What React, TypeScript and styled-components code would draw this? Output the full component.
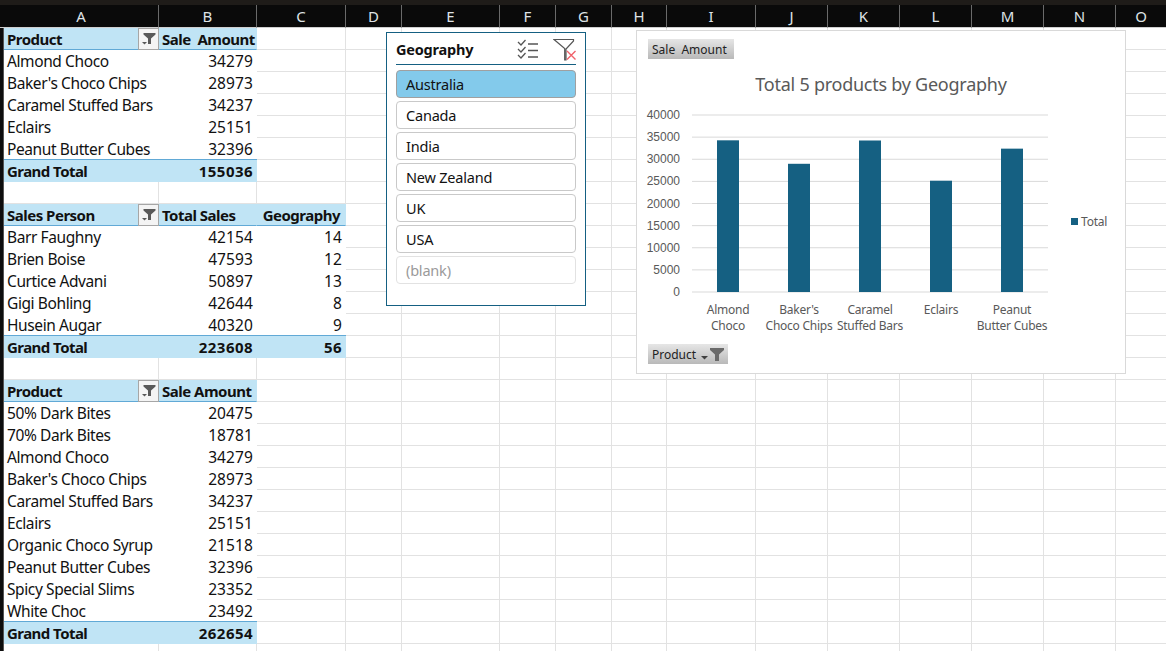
import React from "react";
import styled, { createGlobalStyle } from "styled-components";

const COLUMNS = [
  { name: "A", width: 155 },
  { name: "B", width: 98 },
  { name: "C", width: 89 },
  { name: "D", width: 56 },
  { name: "E", width: 98 },
  { name: "F", width: 56 },
  { name: "G", width: 56 },
  { name: "H", width: 55 },
  { name: "I", width: 89 },
  { name: "J", width: 72 },
  { name: "K", width: 72 },
  { name: "L", width: 72 },
  { name: "M", width: 72 },
  { name: "N", width: 72 },
  { name: "O", width: 51 },
];

type Pivot = {
  head: string[];
  rows: (string | number)[][];
  total: (string | number)[];
};

const PIVOTS: Pivot[] = [
  {
    head: ["Product", "Sale  Amount"],
    rows: [
      ["Almond Choco", 34279],
      ["Baker's Choco Chips", 28973],
      ["Caramel Stuffed Bars", 34237],
      ["Eclairs", 25151],
      ["Peanut Butter Cubes", 32396],
    ],
    total: ["Grand Total", 155036],
  },
  {
    head: ["Sales Person", "Total Sales", "Geography"],
    rows: [
      ["Barr Faughny", 42154, 14],
      ["Brien Boise", 47593, 12],
      ["Curtice Advani", 50897, 13],
      ["Gigi Bohling", 42644, 8],
      ["Husein Augar", 40320, 9],
    ],
    total: ["Grand Total", 223608, 56],
  },
  {
    head: ["Product", "Sale Amount"],
    rows: [
      ["50% Dark Bites", 20475],
      ["70% Dark Bites", 18781],
      ["Almond Choco", 34279],
      ["Baker's Choco Chips", 28973],
      ["Caramel Stuffed Bars", 34237],
      ["Eclairs", 25151],
      ["Organic Choco Syrup", 21518],
      ["Peanut Butter Cubes", 32396],
      ["Spicy Special Slims", 23352],
      ["White Choc", 23492],
    ],
    total: ["Grand Total", 262654],
  },
];

const GEOGRAPHIES = ["Australia", "Canada", "India", "New Zealand", "UK", "USA", "(blank)"];

const BARS = [
  { label: ["Almond", "Choco"], value: 34279 },
  { label: ["Baker's", "Choco Chips"], value: 28973 },
  { label: ["Caramel", "Stuffed Bars"], value: 34237 },
  { label: ["Eclairs"], value: 25151 },
  { label: ["Peanut", "Butter Cubes"], value: 32396 },
];

const FunnelButtonIcon = () => (
  <svg width="18" height="18" viewBox="0 0 18 18">
    <path d="M3.500 3h12v1.500l-4.500 4v5.500h-3V8.500l-4.500-4z" fill="#595959" />
    <path d="M2 12h5l-2.500 2.500z" fill="#595959" />
  </svg>
);

const ChecklistIcon = () => (
  <svg width="22" height="20" viewBox="0 0 22 20" fill="none" stroke="#555" strokeWidth="1.3">
    <path d="M1 3l3 3 4.500-5M1 10l3 3 4.500-5M1 16l3 3 4.500-5" />
    <path d="M11 5h10M11 11.500h10M11 18h10" strokeWidth="1.500" />
  </svg>
);

const ClearFilterIcon = () => (
  <svg width="24" height="23" viewBox="0 0 24 23" fill="none">
    <path d="M1 1.500h19.500v1.500l-7.500 8v11h-1.300v-11.500l-9.500-8z" stroke="#555" strokeWidth="1.200" fill="#fff" />
    <path d="M14 13l8.500 8.500M22.500 13L14 21.500" stroke="#f0616a" strokeWidth="1.400" />
  </svg>
);

const PLOT_LEFT = 55;
const PLOT_RIGHT = 411;
const PLOT_BOTTOM = 261;
const PLOT_HEIGHT = 177;

const ColumnChart = () => (
  <svg width="488" height="342" viewBox="0 0 488 342" style={{ display: "block" }}>
    {[0, 5000, 10000, 15000, 20000, 25000, 30000, 35000, 40000].map((tick) => {
      const y = PLOT_BOTTOM - (tick / 40000) * PLOT_HEIGHT;
      return (
        <g key={tick}>
          <line x1={PLOT_LEFT} x2={PLOT_RIGHT} y1={y} y2={y} stroke="#d9d9d9" strokeWidth="1" />
          <text x={43} y={y + 4} textAnchor="end" fontSize="12" fontFamily="Liberation Sans" fill="#595959">
            {tick}
          </text>
        </g>
      );
    })}
    {BARS.map((bar, i) => {
      const height = (bar.value / 40000) * PLOT_HEIGHT;
      const center = 91 + i * 71;
      return (
        <g key={bar.label.join(" ")}>
          <rect x={center - 11} y={PLOT_BOTTOM - height} width="22" height={height} fill="#156082" />
          {bar.label.map((line, j) => (
            <text
              key={line}
              x={center}
              y={283 + j * 16}
              textAnchor="middle"
              fontSize="12"
              fontFamily="Noto Sans"
              letterSpacing="-0.25"
              fill="#595959"
            >
              {line}
            </text>
          ))}
        </g>
      );
    })}
    <rect x="434" y="187" width="7" height="7" fill="#156082" />
    <text x="444" y="195" fontSize="12" fontFamily="Noto Sans" letterSpacing="-0.2" fill="#595959">
      Total
    </text>
  </svg>
);

const App = () => {
  const renderRow = (cells: React.ReactNode[], key: string) => (
    <React.Fragment key={key}>
      <RowStub />
      {cells}
      {COLUMNS.slice(cells.length).map((col) => (
        <Cell key={key + col.name} />
      ))}
    </React.Fragment>
  );

  const sheetRows: React.ReactNode[] = [];
  PIVOTS.forEach((pivot, p) => {
    sheetRows.push(
      renderRow(
        pivot.head.map((text, i) => (
          <Cell key={text} $kind="head" $align={i === 2 ? "right" : "left"}>
            {text}
            {i === 0 && (
              <FilterButton>
                <FunnelButtonIcon />
              </FilterButton>
            )}
          </Cell>
        )),
        `head${p}`
      )
    );
    pivot.rows.forEach((row, r) => {
      sheetRows.push(
        renderRow(
          row.map((value, i) => (
            <Cell key={i} $kind="body" $align={i === 0 ? "left" : "right"}>
              {value}
            </Cell>
          )),
          `row${p}-${r}`
        )
      );
    });
    sheetRows.push(
      renderRow(
        pivot.total.map((value, i) => (
          <Cell key={i} $kind="total" $align={i === 0 ? "left" : "right"}>
            {value}
          </Cell>
        )),
        `total${p}`
      )
    );
    sheetRows.push(renderRow([], `gap${p}`));
  });

  return (
    <>
      <GlobalStyle />
      <Window>
        <TopStrip />
        <Sheet>
          <CornerCell />
          {COLUMNS.map((col) => (
            <ColumnHeader key={col.name}>{col.name}</ColumnHeader>
          ))}
          {sheetRows}
        </Sheet>

        <Slicer>
          <SlicerHead>
            <SlicerTitle>Geography</SlicerTitle>
            <SlicerTools>
              <ChecklistIcon />
              <ClearFilterIcon />
            </SlicerTools>
          </SlicerHead>
          <SlicerList>
            {GEOGRAPHIES.map((name, i) => (
              <SlicerItem key={name} $selected={i === 0} $empty={name === "(blank)"}>
                {name}
              </SlicerItem>
            ))}
          </SlicerList>
        </Slicer>

        <ChartCard>
          <ChartTitle>Total 5 products by Geography</ChartTitle>
          <ValueField>Sale&nbsp;&nbsp;Amount</ValueField>
          <ColumnChart />
          <AxisField>
            Product
            <svg width="25" height="16" viewBox="0 0 25 16">
              <path d="M1 10h7l-3.500 3.500z" fill="#404040" />
              <path d="M10 2h14v2l-5 4.500v6.500h-4V8.500l-5-4.500z" fill="#6a6a6a" />
            </svg>
          </AxisField>
        </ChartCard>
      </Window>
    </>
  );
};

export default App;

const GlobalStyle = createGlobalStyle`
  html, body {
    margin: 0;
    padding: 0;
    background: #fff;
  }
`;

const Window = styled.div`
  position: relative;
  width: 1166px;
  height: 651px;
  overflow: hidden;
  font-family: "Noto Sans", "Liberation Sans", sans-serif;
  color: #111;
`;

const TopStrip = styled.div`
  height: 5px;
  background: #1f1c19;
`;

const Sheet = styled.div`
  display: grid;
  grid-template-columns: 4px ${COLUMNS.map((c) => `${c.width}px`).join(" ")};
  grid-template-rows: 23px;
  grid-auto-rows: 22px;
`;

const CornerCell = styled.div`
  background: #0a0a0a;
  border-bottom: 1px solid #cfcfcf;
`;

const ColumnHeader = styled.div`
  display: flex;
  align-items: center;
  justify-content: center;
  background: #0a0a0a;
  color: #dfe3e6;
  font-size: 15px;
  border-right: 1px solid #6a6a6a;
  border-bottom: 1px solid #cfcfcf;
  box-sizing: border-box;
`;

const RowStub = styled.div`
  background: #0d0d0d;
  border-right: 1px solid #555;
  box-sizing: border-box;
`;

type CellProps = { $kind?: "head" | "body" | "total"; $align?: "left" | "right" };

const cellSpacing = (p: CellProps) => {
  if (p.$kind === "body") return p.$align === "right" ? "0.1px" : "-0.4px";
  if (p.$kind === "total") return p.$align === "right" ? "0.45px" : "-0.55px";
  return "-0.5px";
};

const Cell = styled.div<CellProps>`
  position: relative;
  box-sizing: border-box;
  display: flex;
  align-items: center;
  justify-content: ${(p) => (p.$align === "right" ? "flex-end" : "flex-start")};
  padding: ${(p) => (p.$kind === "body" ? "1px" : "0")} ${(p) => (p.$kind === "head" ? "5px" : "3px")} 0 3px;
  font-size: ${(p) => (p.$kind === "body" ? "15.5px" : "15px")};
  letter-spacing: ${cellSpacing};
  white-space: pre;
  font-weight: ${(p) => (p.$kind === "head" || p.$kind === "total" ? 700 : 400)};
  background: ${(p) => (p.$kind === "head" || p.$kind === "total" ? "#c0e4f5" : "#fff")};
  box-shadow: ${(p) => (p.$kind === "total" ? "0 -1px 0 #61a9d6" : "none")};
  border-right: 1px solid ${(p) => (p.$kind ? "transparent" : "#e2e2e2")};
  border-bottom: 1px solid
    ${(p) => {
      if (p.$kind === "head") return "#61a9d6";
      if (p.$kind === "total") return "#c0e4f5";
      if (p.$kind === "body") return "#fff";
      return "#e2e2e2";
    }};
`;

const FilterButton = styled.span`
  position: absolute;
  top: 0;
  right: -1px;
  width: 21px;
  height: 22px;
  box-sizing: border-box;
  display: flex;
  align-items: center;
  justify-content: center;
  background: #f4f4f4;
  border: 1px solid #a6a6a6;
`;

const Slicer = styled.section`
  position: absolute;
  left: 386px;
  top: 32px;
  width: 200px;
  height: 274px;
  box-sizing: border-box;
  padding: 0 9px;
  background: #fff;
  border: 1px solid #156082;
`;

const SlicerHead = styled.header`
  display: flex;
  align-items: center;
  justify-content: space-between;
  height: 31px;
  border-bottom: 1px solid #156082;
`;

const SlicerTitle = styled.h3`
  margin: 0;
  font-size: 14.5px;
  font-weight: 700;
  letter-spacing: -0.2px;
`;

const SlicerTools = styled.div`
  display: flex;
  align-items: center;
  gap: 14px;
  margin-right: -1px;
  margin-top: 1px;
`;

const SlicerList = styled.div`
  display: flex;
  flex-direction: column;
  gap: 3px;
  margin-top: 5px;
`;

const SlicerItem = styled.div<{ $selected?: boolean; $empty?: boolean }>`
  height: 28px;
  box-sizing: border-box;
  display: flex;
  align-items: center;
  padding-left: 9px;
  font-size: 14.5px;
  letter-spacing: -0.2px;
  border-radius: 4px;
  color: ${(p) => (p.$empty ? "#9a9a9a" : "#111")};
  background: ${(p) => (p.$selected ? "#83caeb" : "#fff")};
  border: 1px solid ${(p) => (p.$selected ? "#a0a0a0" : p.$empty ? "#e2e2e2" : "#c9c9c9")};
`;

const ChartCard = styled.section`
  position: absolute;
  left: 636px;
  top: 30px;
  width: 490px;
  height: 344px;
  box-sizing: border-box;
  background: #fff;
  border: 1px solid #d9d9d9;
`;

const ChartTitle = styled.h2`
  position: absolute;
  left: 0;
  right: 0;
  top: 40px;
  margin: 0;
  text-align: center;
  font-size: 18px;
  font-weight: 400;
  letter-spacing: -0.25px;
  line-height: 26px;
  color: #595959;
`;

const FieldButton = styled.div`
  position: absolute;
  left: 11px;
  height: 20px;
  box-sizing: border-box;
  display: flex;
  align-items: center;
  padding-left: 4px;
  font-size: 12px;
  white-space: pre;
  color: #222;
  background: linear-gradient(#e6e6e6, #b9b9b9);
`;

const ValueField = styled(FieldButton)`
  top: 8px;
  width: 86px;
`;

const AxisField = styled(FieldButton)`
  top: 313px;
  width: 80px;
  gap: 4px;
`;
